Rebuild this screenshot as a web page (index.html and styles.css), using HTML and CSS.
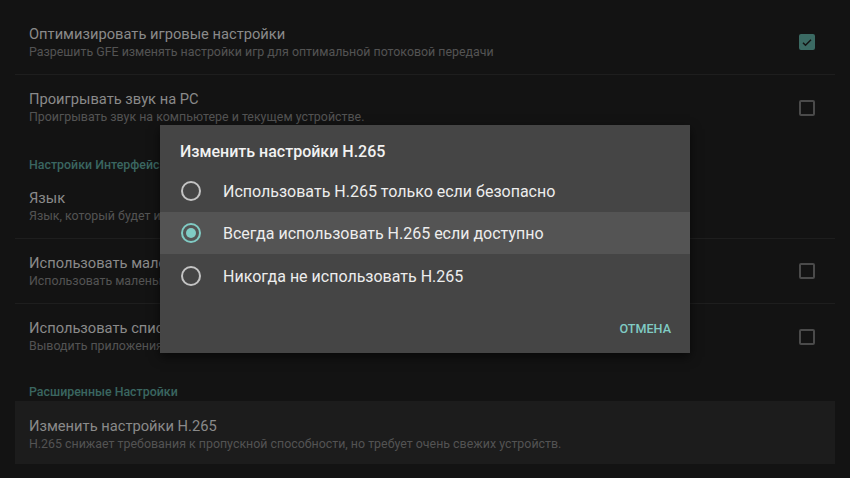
FILE: index.html
```html
<!DOCTYPE html>
<html lang="ru">
<head>
    <meta charset="UTF-8">
    <meta name="viewport" content="width=device-width, initial-scale=1.0">
    <title>Настройки</title>
    <link rel="stylesheet" href="styles.css">
</head>
<body>
    <div class="prefs">
        <div class="pref divided">
            <div class="pref-text">
                <div class="pref-title">Оптимизировать игровые настройки</div>
                <div class="pref-summary">Разрешить GFE изменять настройки игр для оптимальной потоковой передачи</div>
            </div>
            <span class="check checked">
                <svg width="13" height="13" viewBox="0 0 24 24"><path d="M4 12.5l5 5L20 6.5" fill="none" stroke="#141414" stroke-width="3"/></svg>
            </span>
        </div>
        <div class="pref">
            <div class="pref-text">
                <div class="pref-title">Проигрывать звук на PC</div>
                <div class="pref-summary">Проигрывать звук на компьютере и текущем устройстве.</div>
            </div>
            <span class="check"></span>
        </div>

        <div class="category first">Настройки Интерфейса</div>
        <div class="pref divided">
            <div class="pref-text">
                <div class="pref-title">Язык</div>
                <div class="pref-summary">Язык, который будет использоваться в приложении</div>
            </div>
        </div>
        <div class="pref divided">
            <div class="pref-text">
                <div class="pref-title">Использовать маленькие значки</div>
                <div class="pref-summary">Использовать маленькие значки в сетке приложений</div>
            </div>
            <span class="check"></span>
        </div>
        <div class="pref">
            <div class="pref-text">
                <div class="pref-title">Использовать список приложений</div>
                <div class="pref-summary">Выводить приложения списком вместо сетки</div>
            </div>
            <span class="check"></span>
        </div>

        <div class="category">Расширенные Настройки</div>
        <div class="pref focused">
            <div class="pref-text">
                <div class="pref-title">Изменить настройки H.265</div>
                <div class="pref-summary">H.265 снижает требования к пропускной способности, но требует очень свежих устройств.</div>
            </div>
        </div>
    </div>

    <div class="dialog">
        <div class="dialog-title">Изменить настройки H.265</div>
        <div class="options">
            <div class="option"><span class="radio"></span>Использовать H.265 только если безопасно</div>
            <div class="option selected"><span class="radio on"></span>Всегда использовать H.265 если доступно</div>
            <div class="option"><span class="radio"></span>Никогда не использовать H.265</div>
        </div>
        <div class="dialog-actions">
            <button class="btn-text">Отмена</button>
        </div>
    </div>
</body>
</html>
```

FILE: styles.css
```css
html, body {
    height: 100%;
}

body {
    margin: 0;
    background-color: #131313;
    font-family: Roboto, 'Noto Sans', sans-serif;
    overflow: hidden;
}

.prefs {
    padding: 10px 15px 0;
}

.pref {
    display: flex;
    align-items: center;
    height: 65px;
    padding: 0 20px 0 14px;
    box-sizing: border-box;
}

.pref.divided {
    border-bottom: 1px solid #1e1e1e;
}

.pref-text {
    flex: 1;
    min-width: 0;
}

.pref-title {
    font-size: 14.7px;
    line-height: 19px;
    color: #8a8a8a;
    white-space: nowrap;
}

.pref-summary {
    font-size: 12.4px;
    line-height: 16px;
    color: #535353;
    white-space: nowrap;
}

.pref.focused {
    height: 63px;
    align-items: flex-start;
    padding-top: 16px;
    background-color: #1c1c1c;
}

.category {
    padding: 15px 0 0 14px;
    height: 32px;
    box-sizing: border-box;
    font-size: 12.4px;
    line-height: 16px;
    font-weight: 500;
    color: #3a6660;
}

.category.first {
    padding-top: 17px;
    height: 34px;
}

.check {
    width: 12px;
    height: 12px;
    border: 2px solid #4a4a4a;
    border-radius: 2px;
    display: flex;
    align-items: center;
    justify-content: center;
}

.check.checked {
    background-color: #3b6a63;
    border-color: #3b6a63;
}

/* dialog sits on top of the list */
.dialog {
    position: absolute;
    left: 160px;
    top: 125px;
    width: 530px;
    height: 228px;
    background-color: #454545;
    box-shadow: 0 4px 10px rgba(0, 0, 0, 0.6);
    color: #eeeeee;
}

.dialog-title {
    padding: 17px 20px 0;
    height: 44px;
    box-sizing: border-box;
    font-size: 16px;
    line-height: 20px;
    font-weight: 500;
    color: #f2f2f2;
}

.option {
    display: flex;
    align-items: center;
    height: 42px;
    padding-left: 21px;
    font-size: 16px;
    color: #ededed;
}

.option:first-child,
.option:last-child {
    padding-top: 1px;
}

.option.selected {
    background-color: #545454;
}

.radio {
    width: 16px;
    height: 16px;
    border: 2px solid #c4c4c4;
    border-radius: 50%;
    margin-right: 22px;
    box-sizing: content-box;
    display: flex;
    align-items: center;
    justify-content: center;
}

.radio.on {
    border-color: #80cbc4;
}

.radio.on::after {
    content: "";
    width: 10px;
    height: 10px;
    border-radius: 50%;
    background-color: #80cbc4;
}

.dialog-actions {
    display: flex;
    justify-content: flex-end;
    padding: 20px 15px 0;
}

.btn-text {
    background: none;
    border: none;
    padding: 4px 4px 0;
    font-family: inherit;
    font-size: 12.6px;
    font-weight: 500;
    text-transform: uppercase;
    color: #80cbc4;
    cursor: pointer;
}
```
